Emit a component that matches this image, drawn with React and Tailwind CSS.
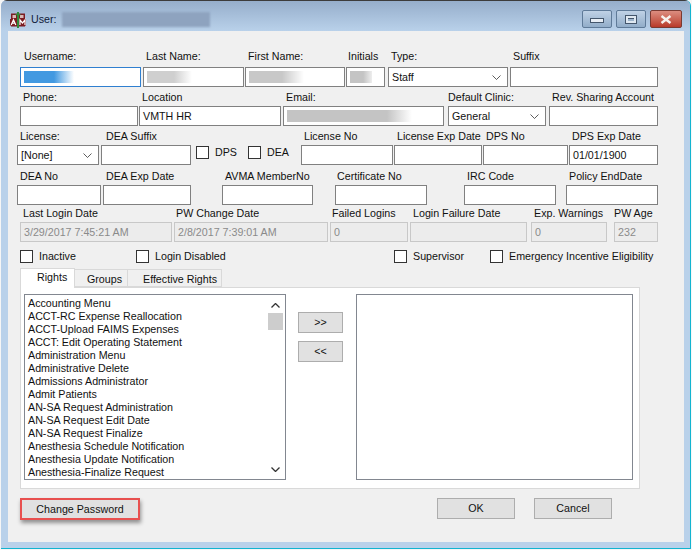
import clsx from "clsx";

const rights = [
  "Accounting Menu",
  "ACCT-RC Expense Reallocation",
  "ACCT-Upload FAIMS Expenses",
  "ACCT: Edit Operating Statement",
  "Administration Menu",
  "Administrative Delete",
  "Admissions Administrator",
  "Admit Patients",
  "AN-SA Request Administration",
  "AN-SA Request Edit Date",
  "AN-SA Request Finalize",
  "Anesthesia Schedule Notification",
  "Anesthesia Update Notification",
  "Anesthesia-Finalize Request",
];

function Chevron({ className, weight = 1.3 }) {
  return (
    <svg viewBox="0 0 9 5" className={clsx("w-[9px] h-[5px]", className)} fill="none" stroke="#333" strokeWidth={weight}>
      <path d="M0.5 0.5 L4.5 4.5 L8.5 0.5" />
    </svg>
  );
}

function Field({ label, className, labelClass, children, value, disabled, blur, select, active }) {
  return (
    <div className={clsx("shrink-0", className)}>
      <div className={clsx("h-[16px] leading-[16px] whitespace-nowrap mb-px", labelClass)}>{label}</div>
      <div
        className={clsx(
          "h-[20px] flex items-center pl-[3px] border relative overflow-hidden",
          disabled ? "bg-[#ececec] border-[#c8c8c8] text-[#8a8a8a]" : "bg-white",
          !disabled && (active ? "border-[#2f7fd0]" : "border-[#808080]")
        )}
      >
        {value}
        {blur}
        {children}
        {select && <Chevron weight={0.8} className="absolute right-[6px] top-[7px]" />}
      </div>
    </div>
  );
}

function Check({ label, className }) {
  return (
    <div className={clsx("flex items-center shrink-0", className)}>
      <div className="w-[13px] h-[13px] bg-white border border-[#333]" />
      <span className="ml-[6px] whitespace-nowrap">{label}</span>
    </div>
  );
}

function Button({ children, className }) {
  return (
    <div className={clsx("flex items-center justify-center bg-[#e1e1e1] border border-[#adadad]", className)}>
      {children}
    </div>
  );
}

function AppIcon() {
  return (
    <svg viewBox="0 0 16 16" className="w-[16px] h-[16px]">
      <rect x="1" y="1.5" width="14" height="13" fill="#7c1c22" />
      <rect x="2.5" y="3" width="3.5" height="3" fill="#d9b8b8" />
      <rect x="10" y="3" width="3.5" height="3" fill="#d9b8b8" />
      <rect x="0" y="7" width="7" height="6.5" fill="#7c1c22" />
      <rect x="9" y="7" width="7" height="6.5" fill="#7c1c22" />
      <path d="M1.2 13 L3.5 7.8 L5.8 13 M2.2 11.2 H4.8 M10 13 V8 L12.5 11 L15 8 V13" fill="none" stroke="#ffffff" strokeWidth="1.2" />
      <rect x="7" y="0" width="2" height="16" fill="#2f8a3a" />
      <rect x="5.5" y="2" width="5" height="1.2" fill="#2f8a3a" />
    </svg>
  );
}

function Smudge({ className }) {
  return <div className={clsx("absolute top-[3px] bottom-[3px] left-[3px]", className)} />;
}

export default function App() {
  return (
    <div className="w-[692px] h-[550px] overflow-hidden bg-[#f6f6f6] pl-px text-[10.7px] text-[#111111] font-['Liberation_Sans',sans-serif]">
      <div className="w-[690px] h-[549px] overflow-hidden bg-[#b9d1ea] rounded-t-[6px] border-r border-b border-[#12b4d0]">
        <div className="h-[31px] flex items-center pl-[9px] pt-[7px] border-t border-[#3c3c3c] bg-linear-to-b from-[#96aecb] to-[#b9d1ea] relative">
          <AppIcon />
          <span className="ml-[5px] text-[#10203a]">User:</span>
          <div className="ml-[5px] w-[148px] h-[15px] bg-[#8ea3bf] blur-[1px]" />
          <div className="absolute right-[8px] top-[9px] flex gap-[4px]">
            <div className="w-[30px] h-[18px] rounded-[2px] border border-[#5f7a98] bg-linear-to-b from-[#c0d2e6] to-[#92adc9] flex items-center justify-center">
              <div className="w-[14px] h-[5px] mt-[3px] bg-[#e8eef5] border border-[#44566c]" />
            </div>
            <div className="w-[30px] h-[18px] rounded-[2px] border border-[#5f7a98] bg-linear-to-b from-[#c0d2e6] to-[#92adc9] flex items-center justify-center">
              <div className="w-[12px] h-[9px] bg-[#dfe8f1] border border-[#44566c] flex items-center justify-center">
                <div className="w-[6px] h-[3px] bg-[#9db4cc] border-t border-[#44566c]" />
              </div>
            </div>
            <div className="w-[32px] h-[18px] rounded-[2px] border border-[#7a3a32] bg-linear-to-b from-[#dc8d80] to-[#b8392a] flex items-center justify-center">
              <svg viewBox="0 0 12 9" className="w-[12px] h-[9px]">
                <path d="M1.5 1 L10.5 8 M10.5 1 L1.5 8" stroke="#f6f1ee" strokeWidth="2.4" />
              </svg>
            </div>
          </div>
        </div>

        <div className="ml-[7px] w-[676px] h-[511px] bg-[#f0f0f0] pt-[17px]">
          {/* row 1 */}
          <div className="flex">
            <Field label="Username:" active className="ml-[12px] w-[121px] [&>div:first-child]:mb-[3px]" labelClass="pl-[4px]" blur={<Smudge className="w-[50px] bg-linear-to-r from-[#4299e1] from-60% to-transparent" />} />
            <Field label="Last Name:" className="ml-[2px] w-[101px] [&>div:first-child]:mb-[3px]" labelClass="pl-[3px]" blur={<Smudge className="w-[45px] bg-linear-to-r from-[#cfcfcf] from-60% to-transparent" />} />
            <Field label="First Name:" className="ml-[1px] w-[100px] [&>div:first-child]:mb-[3px]" labelClass="pl-[3px]" blur={<Smudge className="w-[55px] bg-linear-to-r from-[#c8c8c8] from-60% to-transparent" />} />
            <Field label="Initials" className="ml-[1px] w-[39px] [&>div:first-child]:mb-[3px]" labelClass="pl-[2px]" blur={<Smudge className="w-[22px] bg-linear-to-r from-[#c4c4c4] from-60% to-[#eeeeee]" />} />
            <Field label="Type:" value="Staff" select className="ml-[3px] w-[120px] [&>div:first-child]:mb-[3px]" labelClass="pl-[3px]" />
            <Field label="Suffix" className="ml-[2px] w-[148px] [&>div:first-child]:mb-[3px]" labelClass="pl-[3px]" />
          </div>

          {/* row 2 */}
          <div className="flex mt-[2px]">
            <Field label="Phone:" className="ml-[12px] w-[118px]" labelClass="pl-[3px]" />
            <Field label="Location" value="VMTH HR" className="ml-px w-[142px]" labelClass="pl-[3px]" />
            <Field label="Email:" className="ml-[2px] w-[161px]" labelClass="pl-[3px]" blur={<Smudge className="w-[125px] bg-linear-to-r from-[#c4c4c4] from-80% to-transparent" />} />
            <Field label="Default Clinic:" value="General" select className="ml-[4px] w-[98px]" labelClass="pl-0" />
            <Field label="Rev. Sharing Account" className="ml-[3px] w-[109px]" labelClass="pl-[3px]" />
          </div>

          {/* row 3 */}
          <div className="flex mt-[2px]">
            <Field label="License:" value="[None]" select className="ml-[9px] w-[82px]" labelClass="pl-[3px]" />
            <Field label="DEA Suffix" className="ml-[2px] w-[90px]" labelClass="pl-[5px]" />
            <Check label="DPS" className="ml-[5px] w-[52px] self-end h-[20px] -translate-y-[3px]" />
            <Check label="DEA" className="w-[53px] self-end h-[20px] -translate-y-[3px]" />
            <Field label="License No" className="w-[92px]" labelClass="pl-[3px]" />
            <Field label="License Exp Date" className="ml-px w-[88px]" labelClass="pl-[3px]" />
            <Field label="DPS No" className="ml-px w-[85px]" labelClass="pl-[3px]" />
            <Field label="DPS Exp Date" value="01/01/1900" className="ml-[1px] w-[89px]" labelClass="pl-[3px]" />
          </div>

          {/* row 4 */}
          <div className="flex mt-[3px]">
            <Field label="DEA No" className="ml-[9px] w-[84px]" labelClass="pl-[3px]" />
            <Field label="DEA Exp Date" className="ml-[2px] w-[88px]" labelClass="pl-[3px]" />
            <Field label="AVMA MemberNo" className="ml-[31px] w-[91px]" labelClass="pl-[3px]" />
            <Field label="Certificate No" className="ml-[22px] w-[92px]" labelClass="pl-[2px]" />
            <Field label="IRC Code" className="ml-[37px] w-[92px]" labelClass="pl-[3px]" />
            <Field label="Policy EndDate" className="ml-[10px] w-[92px]" labelClass="pl-[3px]" />
          </div>

          {/* row 5 */}
          <div className="flex">
            <Field label="Last Login Date" value="3/29/2017 7:45:21 AM" disabled className="ml-[12px] w-[152px]" labelClass="pl-[3px]" />
            <Field label="PW Change Date" value="2/8/2017 7:39:01 AM" disabled className="ml-[2px] w-[154px]" labelClass="pl-[2px]" />
            <Field label="Failed Logins" value="0" disabled className="ml-[2px] w-[78px]" labelClass="pl-[2px]" />
            <Field label="Login Failure Date" disabled className="ml-[2px] w-[117px]" labelClass="pl-[3px]" />
            <Field label="Exp. Warnings" value="0" disabled className="ml-[4px] w-[76px]" labelClass="pl-[3px]" />
            <Field label="PW Age" value="232" disabled className="ml-[7px] w-[44px]" labelClass="pl-0" />
          </div>

          {/* checkboxes */}
          <div className="flex h-[13px] mt-[8px]">
            <Check label="Inactive" className="ml-[12px] w-[116px]" />
            <Check label="Login Disabled" className="w-[258px]" />
            <Check label="Supervisor" className="w-[96px]" />
            <Check label="Emergency Incentive Eligibility" />
          </div>

          {/* tabs */}
          <div className="flex h-[19px] mt-[5px] ml-[12px] relative z-10">
            <div className="w-[55px] h-[20px] bg-white border border-b-0 border-[#d9d9d9] pl-[16px] leading-[17px]">Rights</div>
            <div className="w-[53px] mt-[1px] bg-[#f0f0f0] border border-l-0 border-[#d9d9d9] pl-[12px] leading-[19px]">Groups</div>
            <div className="w-[94px] mt-[1px] bg-[#f0f0f0] border border-l-0 border-[#d9d9d9] pl-[15px] leading-[19px] whitespace-nowrap">Effective Rights</div>
          </div>

          <div className="ml-[12px] w-[620px] h-[202px] bg-white border border-[#d9d9d9] flex pt-[6px] pl-[3px]">
            <div className="w-[262px] h-[186px] border border-[#828790] flex">
              <div className="flex-1 pt-[2px] pl-[3px]">
                {rights.map((r) => (
                  <div key={r} className="h-[13px] leading-[13px] whitespace-nowrap">{r}</div>
                ))}
              </div>
              <div className="w-[15px] mr-[2px] flex flex-col items-center pt-[8px]">
                <Chevron className="rotate-180" />
                <div className="w-[15px] h-[17px] mt-[5px] bg-[#cdcdcd]" />
                <Chevron className="mt-auto mb-[7px]" />
              </div>
            </div>
            <div className="ml-[12px] pt-[18px] flex flex-col gap-[8px]">
              <Button className="w-[45px] h-[21px]">&gt;&gt;</Button>
              <Button className="w-[45px] h-[21px]">&lt;&lt;</Button>
            </div>
            <div className="ml-[13px] w-[277px] h-[186px] border border-[#828790]" />
          </div>

          {/* footer */}
          <div className="flex mt-[9px]">
            <div className="ml-[12px] w-[120px] h-[22px] border-[2px] border-[#e8504f] bg-[#e1e1e1] shadow-[1px_3px_4px_rgba(0,0,0,0.4)] flex items-center justify-center">
              Change Password
            </div>
            <Button className="ml-[297px] w-[78px] h-[21px]">OK</Button>
            <Button className="ml-[19px] w-[78px] h-[21px]">Cancel</Button>
          </div>
        </div>
      </div>
    </div>
  );
}
